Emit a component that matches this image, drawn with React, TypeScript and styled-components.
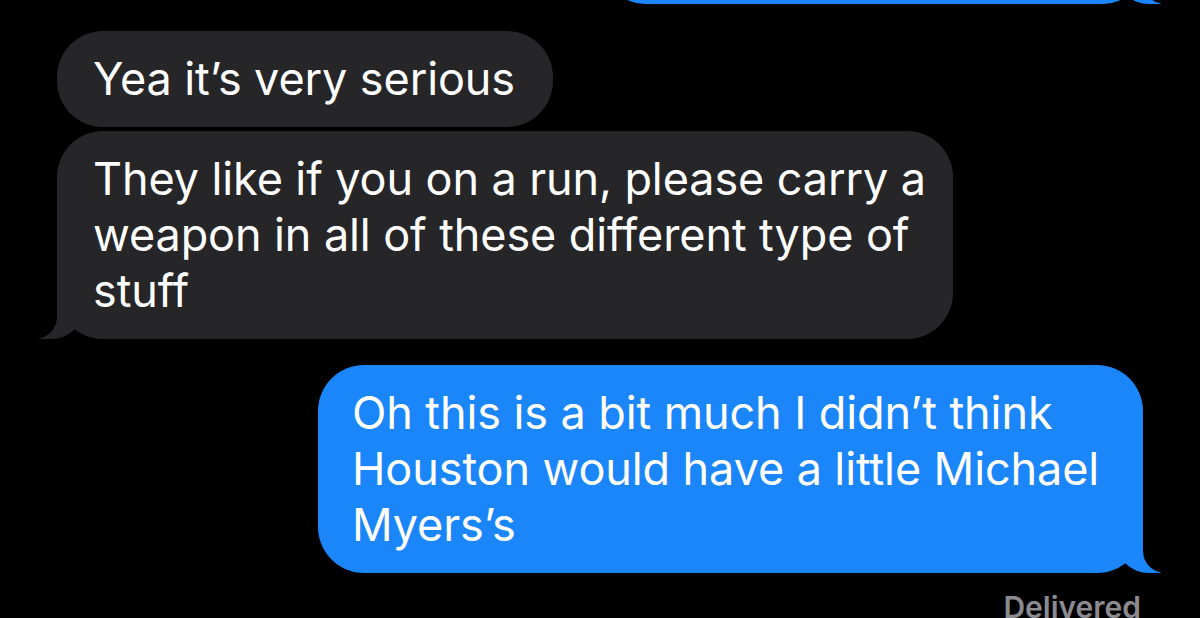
import React from 'react';
import styled, { createGlobalStyle } from 'styled-components';

const Global = createGlobalStyle`
  html, body {
    margin: 0;
    padding: 0;
    background: #000;
    overflow: hidden;
  }
`;

const Thread = styled.div`
  width: 1200px;
  height: 618px;
  box-sizing: border-box;
  padding: 0 57px;
  display: flex;
  flex-direction: column;
  font-family: Inter, "Liberation Sans", sans-serif;
  background: #000;
  overflow: hidden;

  & > * {
    flex-shrink: 0;
  }
`;

const Bubble = styled.div<{ $mine?: boolean; $gap?: number; $tail?: boolean; $width?: number }>`
  position: relative;
  align-self: ${(p) => (p.$mine ? 'flex-end' : 'flex-start')};
  margin-top: ${(p) => p.$gap ?? 0}px;
  width: ${(p) => (p.$width ? `${p.$width}px` : 'auto')};
  box-sizing: border-box;
  padding: 20px 30px 20px ${(p) => (p.$mine ? 34 : 36)}px;
  border-radius: 46px;
  background: ${(p) => (p.$mine ? '#1b86fa' : '#262628')};
  color: #fff;
  font-size: 45px;
  line-height: 56px;
  letter-spacing: -0.1px;
  white-space: pre;

  ${(p) =>
    p.$tail &&
    `
    &::before {
      content: '';
      position: absolute;
      bottom: 0;
      ${p.$mine ? 'right: -18px;' : 'left: -18px;'}
      width: 46px;
      height: 46px;
      background: ${p.$mine ? '#1b86fa' : '#262628'};
      ${p.$mine ? 'border-bottom-left-radius: 34px;' : 'border-bottom-right-radius: 34px;'}
    }
    &::after {
      content: '';
      position: absolute;
      bottom: 0;
      ${p.$mine ? 'right: -23px;' : 'left: -23px;'}
      width: 23px;
      height: 46px;
      background: #000;
      ${p.$mine ? 'border-bottom-left-radius: 22px;' : 'border-bottom-right-radius: 22px;'}
    }
  `}
`;

const Text = styled.span`
  position: relative;
  z-index: 1;
`;

const Earlier = styled(Bubble)`
  height: 80px;
  margin-top: -76px;
`;

const Status = styled.div`
  align-self: flex-end;
  margin-top: 16px;
  margin-right: 2px;
  font-size: 30px;
  font-weight: 600;
  color: #8a8a8f;
`;

const App = () => (
  <>
    <Global />
    <Thread>
      <Earlier $mine $tail $width={538} />
      <Bubble $gap={27} $width={496}>
        <Text>Yea it’s very serious</Text>
      </Bubble>
      <Bubble $gap={4} $tail $width={896}>
        <Text>
          {'They like if you on a run, please carry a\nweapon in all of these different type of\nstuff'}
        </Text>
      </Bubble>
      <Bubble $mine $gap={26} $tail $width={825}>
        <Text>
          {'Oh this is a bit much I didn’t think\nHouston would have a little Michael\nMyers’s'}
        </Text>
      </Bubble>
      <Status>Delivered</Status>
    </Thread>
  </>
);

export default App;
